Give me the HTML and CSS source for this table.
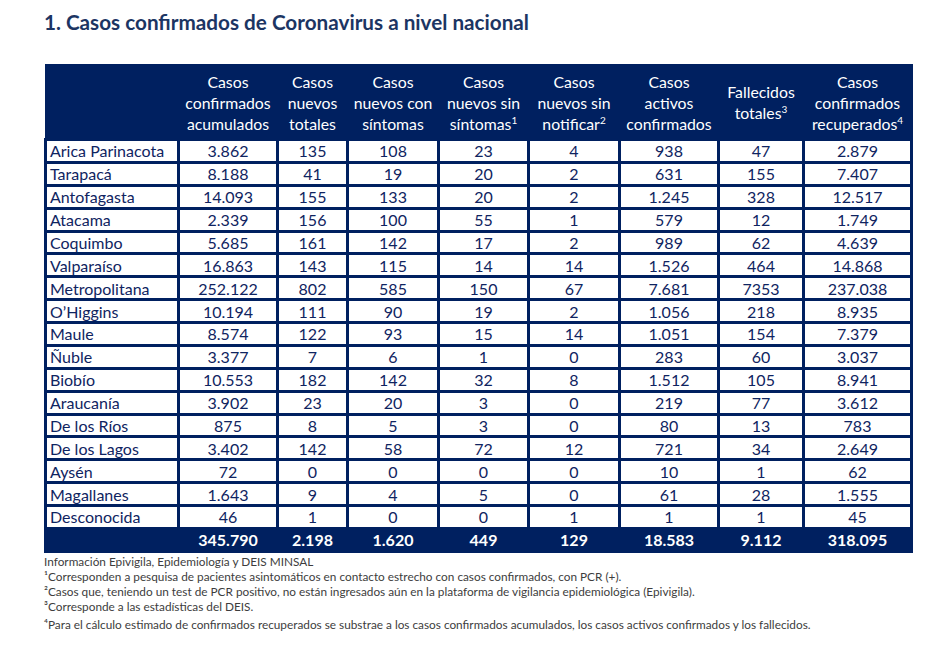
FILE: index.html
```html
<!DOCTYPE html>
<html lang="es">
<head>
<meta charset="utf-8">
<title>Casos confirmados</title>
<link rel="stylesheet" href="styles.css">
</head>
<body>
<div class="page">
  <h1 class="title">1. Casos confirmados de Coronavirus a nivel nacional</h1>
  <table class="data">
    <colgroup>
      <col class="c-region"><col class="c1"><col class="c2"><col class="c3"><col class="c4"><col class="c5"><col class="c6"><col class="c7"><col class="c8">
    </colgroup>
    <thead>
      <tr>
        <th></th>
        <th>Casos<br>confirmados<br>acumulados</th>
        <th>Casos<br>nuevos<br>totales</th>
        <th>Casos<br>nuevos con<br>síntomas</th>
        <th>Casos<br>nuevos sin<br>síntomas<sup>1</sup></th>
        <th>Casos<br>nuevos sin<br>notificar<sup>2</sup></th>
        <th>Casos<br>activos<br>confirmados</th>
        <th>Fallecidos<br>totales<sup>3</sup></th>
        <th>Casos<br>confirmados<br>recuperados<sup>4</sup></th>
      </tr>
    </thead>
    <tbody>
      <tr><td>Arica Parinacota</td><td>3.862</td><td>135</td><td>108</td><td>23</td><td>4</td><td>938</td><td>47</td><td>2.879</td></tr>
      <tr><td>Tarapacá</td><td>8.188</td><td>41</td><td>19</td><td>20</td><td>2</td><td>631</td><td>155</td><td>7.407</td></tr>
      <tr><td>Antofagasta</td><td>14.093</td><td>155</td><td>133</td><td>20</td><td>2</td><td>1.245</td><td>328</td><td>12.517</td></tr>
      <tr><td>Atacama</td><td>2.339</td><td>156</td><td>100</td><td>55</td><td>1</td><td>579</td><td>12</td><td>1.749</td></tr>
      <tr><td>Coquimbo</td><td>5.685</td><td>161</td><td>142</td><td>17</td><td>2</td><td>989</td><td>62</td><td>4.639</td></tr>
      <tr><td>Valparaíso</td><td>16.863</td><td>143</td><td>115</td><td>14</td><td>14</td><td>1.526</td><td>464</td><td>14.868</td></tr>
      <tr><td>Metropolitana</td><td>252.122</td><td>802</td><td>585</td><td>150</td><td>67</td><td>7.681</td><td>7353</td><td>237.038</td></tr>
      <tr><td>O’Higgins</td><td>10.194</td><td>111</td><td>90</td><td>19</td><td>2</td><td>1.056</td><td>218</td><td>8.935</td></tr>
      <tr><td>Maule</td><td>8.574</td><td>122</td><td>93</td><td>15</td><td>14</td><td>1.051</td><td>154</td><td>7.379</td></tr>
      <tr><td>Ñuble</td><td>3.377</td><td>7</td><td>6</td><td>1</td><td>0</td><td>283</td><td>60</td><td>3.037</td></tr>
      <tr><td>Biobío</td><td>10.553</td><td>182</td><td>142</td><td>32</td><td>8</td><td>1.512</td><td>105</td><td>8.941</td></tr>
      <tr><td>Araucanía</td><td>3.902</td><td>23</td><td>20</td><td>3</td><td>0</td><td>219</td><td>77</td><td>3.612</td></tr>
      <tr><td>De los Ríos</td><td>875</td><td>8</td><td>5</td><td>3</td><td>0</td><td>80</td><td>13</td><td>783</td></tr>
      <tr><td>De los Lagos</td><td>3.402</td><td>142</td><td>58</td><td>72</td><td>12</td><td>721</td><td>34</td><td>2.649</td></tr>
      <tr><td>Aysén</td><td>72</td><td>0</td><td>0</td><td>0</td><td>0</td><td>10</td><td>1</td><td>62</td></tr>
      <tr><td>Magallanes</td><td>1.643</td><td>9</td><td>4</td><td>5</td><td>0</td><td>61</td><td>28</td><td>1.555</td></tr>
      <tr><td>Desconocida</td><td>46</td><td>1</td><td>0</td><td>0</td><td>1</td><td>1</td><td>1</td><td>45</td></tr>
    </tbody>
    <tfoot>
      <tr><td></td><td>345.790</td><td>2.198</td><td>1.620</td><td>449</td><td>129</td><td>18.583</td><td>9.112</td><td>318.095</td></tr>
    </tfoot>
  </table>
  <div class="notes">
    <p>Información Epivigila, Epidemiología y DEIS MINSAL</p>
    <p>¹Corresponden a pesquisa de pacientes asintomáticos en contacto estrecho con casos confirmados, con PCR (+).</p>
    <p>²Casos que, teniendo un test de PCR positivo, no están ingresados aún en la plataforma de vigilancia epidemiológica (Epivigila).</p>
    <p>³Corresponde a las estadísticas del DEIS.</p>
    <p class="last">⁴Para el cálculo estimado de confirmados recuperados se substrae a los casos confirmados acumulados, los casos activos confirmados y los fallecidos.</p>
  </div>
</div>
</body>
</html>
```
FILE: styles.css
```css
html, body {
  margin: 0;
  padding: 0;
  background: #ffffff;
}
.page {
  padding: 10px 0 0 44px;
  font-family: Lato, "Open Sans", sans-serif;
}
.title {
  margin: 0;
  font-size: 20.7px;
  line-height: 24px;
  font-weight: 700;
  color: #1c3563;
}
.data {
  margin-top: 30px;
  border-collapse: collapse;
  table-layout: fixed;
  width: 866px;
  color: #0f2461;
  font-size: 16px;
}
.c-region { width: 133px; }
.c1 { width: 99px; }
.c2 { width: 70px; }
.c3 { width: 91px; }
.c4 { width: 90px; }
.c5 { width: 91px; }
.c6 { width: 99px; }
.c7 { width: 85px; }
.c8 { width: 108px; }
.data th {
  background: #002060;
  color: #ffffff;
  font-weight: 400;
  font-size: 15.8px;
  line-height: 21px;
  height: 72px;
  padding: 0;
  border: 2px solid #002060;
  text-align: center;
  vertical-align: middle;
}
.data th sup {
  font-size: 10px;
  line-height: 0;
  vertical-align: 6px;
}
.data td {
  border: 3px solid #002060;
  height: 19.875px;
  padding: 0;
  line-height: 19px;
  text-align: center;
}
.data tbody td:first-child {
  text-align: left;
  padding-left: 3px;
}
.data tfoot td {
  background: #002060;
  color: #ffffff;
  font-weight: 700;
}
.notes {
  margin-top: 1px;
  font-size: 11.8px;
  color: #3d3d3d;
}
.notes p {
  margin: 0;
  line-height: 15px;
}
.notes .last {
  margin-top: 3px;
}
```
